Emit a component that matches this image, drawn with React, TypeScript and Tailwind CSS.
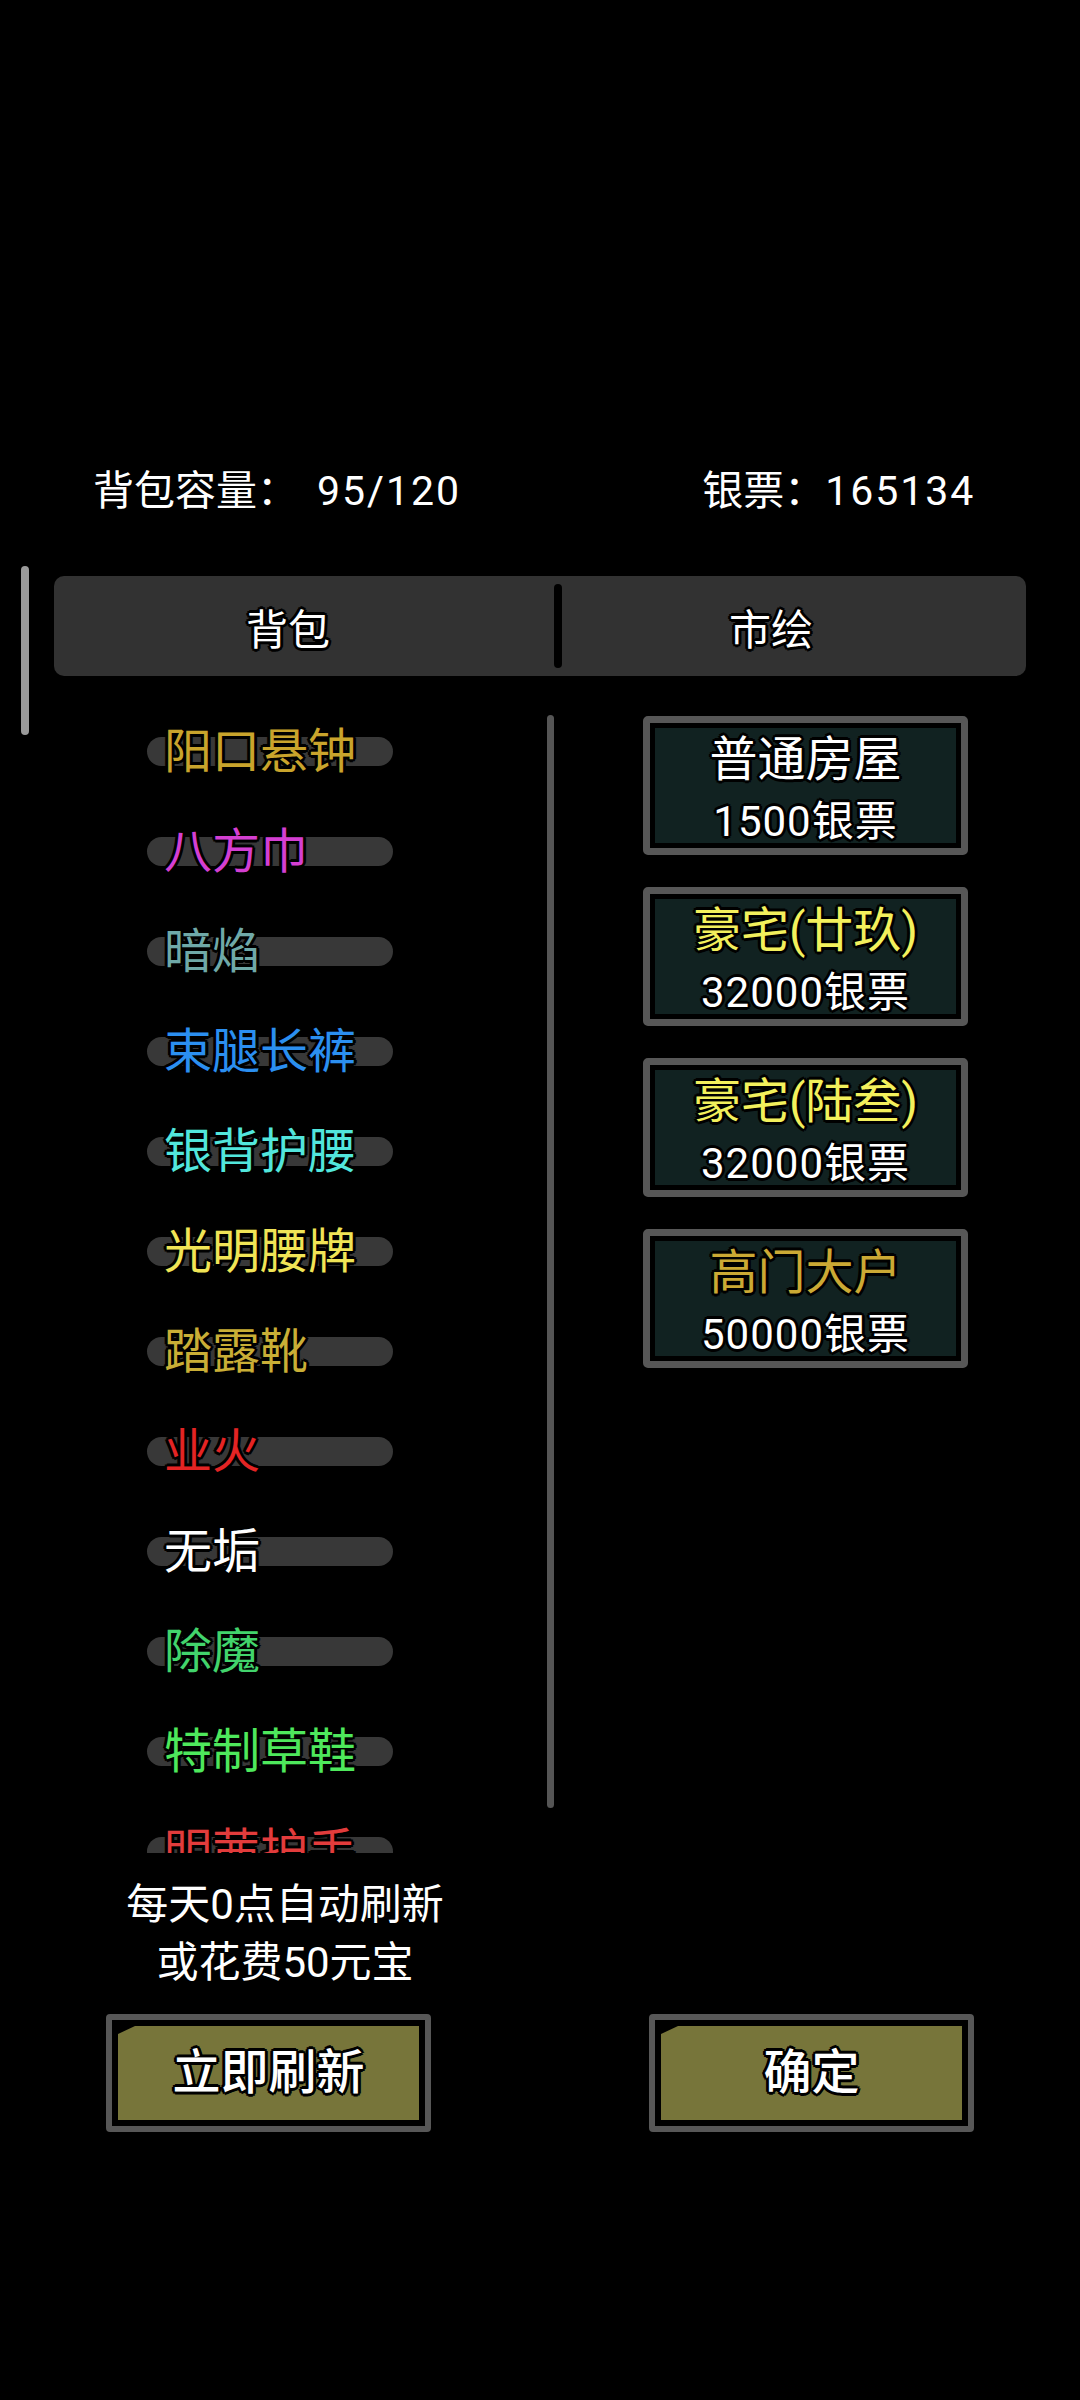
import React from "react";

const FONT = 'Roboto, "Noto Sans CJK SC", "Noto Sans", sans-serif';

const items: { name: string; color: string }[] = [
  { name: "阳口悬钟", color: "#c9a42c" },
  { name: "八方巾", color: "#d43fd2" },
  { name: "暗焰", color: "#6fa9a8" },
  { name: "束腿长裤", color: "#2b8ff0" },
  { name: "银背护腰", color: "#52e6dc" },
  { name: "光明腰牌", color: "#f0e456" },
  { name: "踏露靴", color: "#c9ae36" },
  { name: "业火", color: "#e42424" },
  { name: "无垢", color: "#ffffff" },
  { name: "除魔", color: "#42d46c" },
  { name: "特制草鞋", color: "#4ee85c" },
  { name: "明茜护手", color: "#e23c3c" },
];

const houses: { title: string; color: string; price: string }[] = [
  { title: "普通房屋", color: "#ffffff", price: "1500银票" },
  { title: "豪宅(廿玖)", color: "#f2f05c", price: "32000银票" },
  { title: "豪宅(陆叁)", color: "#f2f05c", price: "32000银票" },
  { title: "高门大户", color: "#cba934", price: "50000银票" },
];

const outline =
  "[text-shadow:-2px_-2px_0_#000,2px_-2px_0_#000,-2px_2px_0_#000,2px_2px_0_#000,0_-3px_0_#000,0_3px_0_#000,-3px_0_0_#000,3px_0_0_#000]";

function Button({ label }: { label: string }) {
  return (
    <div className="w-[325px] h-[118px] border-[6px] border-[#575757] rounded-[4px] bg-black p-[6px]">
      <div className="w-full h-full bg-[#77753a] flex items-center justify-center [clip-path:polygon(17px_0,100%_0,100%_100%,0_100%,0_8px)]">
        <span className={`text-white text-[48px] leading-none font-medium ${outline}`}>
          {label}
        </span>
      </div>
    </div>
  );
}

export default function App() {
  return (
    <div
      className="w-[1080px] h-[2400px] bg-black relative overflow-hidden text-white"
      style={{ fontFamily: FONT }}
    >
      {/* page scrollbar */}
      <div className="absolute left-[21px] top-[566px] w-[8px] h-[169px] rounded-full bg-[#9a9a9a]" />

      {/* header */}
      <div className="pt-[467px] flex items-center text-[41px] leading-[48px] text-white">
        <div className="ml-[93px] flex">
          <span>背包容量：</span>
          <span className="ml-[19px] tracking-[2px]">95/120</span>
        </div>
        <div className="ml-[241px] flex">
          <span>银票：</span>
          <span className="tracking-[2px]">165134</span>
        </div>
      </div>

      {/* tabs */}
      <div className="mt-[61px] ml-[54px] w-[972px] h-[100px] rounded-[10px] bg-[#323232] flex items-center">
        <div className={`w-[468px] text-center text-[42px] leading-none pt-[10px] ${outline}`}>
          背包
        </div>
        <div className="ml-[32px] w-[8px] h-[84px] rounded-full bg-black" />
        <div className={`w-[418px] text-center text-[42px] leading-none pt-[10px] ${outline}`}>
          市绘
        </div>
      </div>

      {/* content */}
      <div className="mt-[25px] flex items-start">
        <div className="w-[547px]">
          <div className="h-[1152px] overflow-hidden pl-[147px]">
            {items.map((it) => (
              <div key={it.name} className="h-[100px] flex items-center">
                <div className="w-[246px] h-[29px] rounded-full bg-[#383838] flex items-center pl-[17px]">
                  <span
                    className={`text-[48px] leading-none pt-[2px] whitespace-nowrap ${outline}`}
                    style={{ color: it.color }}
                  >
                    {it.name}
                  </span>
                </div>
              </div>
            ))}
          </div>
        </div>
        <div className="mt-[14px] w-[7px] h-[1093px] rounded-full bg-[#555555]" />
        <div className="ml-[89px] mt-[15px] flex flex-col gap-[32px]">
          {houses.map((h, i) => (
            <div
              key={i}
              className="w-[325px] h-[139px] border-[7px] border-[#575757] rounded-[5px] bg-black p-[5px]"
            >
              <div className="w-full h-full bg-[#112221] flex flex-col items-center">
                <div
                  className={`pt-[5px] text-[48px] leading-[54px] whitespace-nowrap ${outline}`}
                  style={{ color: h.color }}
                >
                  {h.title}
                </div>
                <div
                  className={`mt-[13px] text-[42px] leading-[44px] tracking-[1px] text-white whitespace-nowrap ${outline}`}
                >
                  {h.price}
                </div>
              </div>
            </div>
          ))}
        </div>
      </div>

      {/* bottom note */}
      <div className="pt-[23px] w-[570px] text-center text-[42px] leading-[58px] text-white">
        <div>每天0点自动刷新</div>
        <div>或花费50元宝</div>
      </div>

      {/* buttons */}
      <div className="mt-[22px] flex">
        <div className="ml-[106px]">
          <Button label="立即刷新" />
        </div>
        <div className="ml-[218px]">
          <Button label="确定" />
        </div>
      </div>
    </div>
  );
}
